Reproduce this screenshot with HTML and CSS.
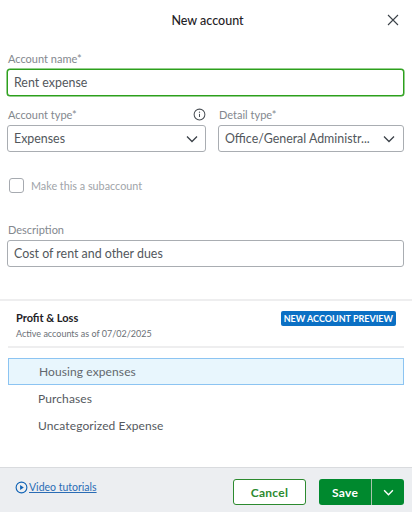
FILE: index.html
```html
<!DOCTYPE html>
<html lang="en">
<head>
<meta charset="utf-8">
<title>New account</title>
<link rel="stylesheet" href="styles.css">
</head>
<body>
<div class="dialog">
  <header class="head">
    <h1 class="title">New account</h1>
    <svg class="close" viewBox="0 0 12 12" width="12" height="12"><path d="M1 1l10 10M11 1L1 11" fill="none" stroke="#3b4148" stroke-width="1.1"/></svg>
  </header>
  <form class="form">
    <div class="field">
      <label class="label">Account name*</label>
      <div class="input input-active">Rent expense</div>
    </div>
    <div class="types">
      <div class="field type-a">
        <div class="label-row">
          <label class="label">Account type*</label>
          <svg class="info" viewBox="0 0 14 14" width="13" height="13"><circle cx="7" cy="7" r="5.8" fill="none" stroke="#4a4f55" stroke-width="1.1"/><path d="M7 6.3v3.4" stroke="#4a4f55" stroke-width="1.1"/><circle cx="7" cy="4.5" r=".7" fill="#4a4f55"/></svg>
        </div>
        <div class="input select">
          <span class="value">Expenses</span>
          <svg class="chev" viewBox="0 0 12 8" width="12" height="8"><path d="M1 1.5l5 5 5-5" fill="none" stroke="#3b4148" stroke-width="1.3"/></svg>
        </div>
      </div>
      <div class="field type-b">
        <div class="label-row"><label class="label">Detail type*</label></div>
        <div class="input select">
          <span class="value">Office/General Administr...</span>
          <svg class="chev" viewBox="0 0 12 8" width="12" height="8"><path d="M1 1.5l5 5 5-5" fill="none" stroke="#3b4148" stroke-width="1.3"/></svg>
        </div>
      </div>
    </div>
    <div class="check-row">
      <span class="check"></span>
      <span class="check-label">Make this a subaccount</span>
    </div>
    <div class="field">
      <label class="label">Description</label>
      <div class="input">Cost of rent and other dues</div>
    </div>
  </form>
  <section class="preview">
    <div class="preview-head">
      <div>
        <div class="pl-title">Profit &amp; Loss</div>
        <div class="pl-sub">Active accounts as of 07/02/2025</div>
      </div>
      <span class="badge">NEW ACCOUNT PREVIEW</span>
    </div>
    <ul class="list">
      <li class="item item-new">Housing expenses</li>
      <li class="item">Purchases</li>
      <li class="item">Uncategorized Expense</li>
    </ul>
  </section>
  <footer class="foot">
    <a class="video" href="#">
      <svg class="play" viewBox="0 0 14 14" width="13" height="13"><circle cx="7" cy="7" r="5.8" fill="none" stroke="#0f62b5" stroke-width="1.2"/><path d="M5.5 4.4l4 2.6-4 2.6z" fill="#0f62b5"/></svg>
      <span class="video-text">Video tutorials</span>
    </a>
    <div class="actions">
      <button class="btn cancel" type="button">Cancel</button>
      <div class="save-group">
        <button class="btn save" type="button">Save</button>
        <button class="btn save-more" type="button" aria-label="More">
          <svg viewBox="0 0 12 8" width="11" height="7"><path d="M1 1.5l5 5 5-5" fill="none" stroke="#fff" stroke-width="1.6"/></svg>
        </button>
      </div>
    </div>
  </footer>
</div>
</body>
</html>
```
FILE: styles.css
```css
* { box-sizing: border-box; }
html, body { margin: 0; padding: 0; }
body {
  width: 412px;
  height: 512px;
  overflow: hidden;
  background: #fff;
  font-family: Lato, "Liberation Sans", sans-serif;
  color: #393a3d;
}
.dialog { display: flex; flex-direction: column; height: 512px; }
.head {
  height: 41px;
  display: flex;
  align-items: center;
  justify-content: center;
  position: relative;
  flex: none;
}
.title { margin: 0 0 1px 3px; font-size: 12.5px; font-weight: 500; color: #1f2226; }
.close { position: absolute; right: 13px; top: 14px; }
.form { padding: 9px 8px 0 7px; flex: none; }
.field { display: flex; flex-direction: column; }
.label { font-size: 11px; line-height: 17px; color: #83888e; padding-left: 1px; }
.label-row { display: flex; justify-content: space-between; align-items: center; height: 17px; }
.input {
  height: 27px;
  margin-top: 2px;
  padding: 0 6px;
  display: flex;
  align-items: center;
  border: 1px solid #a9adb2;
  border-radius: 3px;
  font-size: 12.4px;
  color: #52575c;
  background: #fff;
}
.input-active { border-color: #2ca01c; box-shadow: 0 0 0 .5px #2ca01c; }
.types { display: flex; gap: 12px; margin-top: 10px; }
.type-a { width: 199px; }
.type-b { width: 186px; }
.select { justify-content: space-between; padding-right: 7px; }
.type-b .select { padding-right: 8px; }
.value { white-space: nowrap; }
.info { margin-bottom: 1px; }
.check-row { display: flex; align-items: center; gap: 7px; margin: 26px 0 0 2px; height: 15px; }
.check { width: 15px; height: 15px; border: 1px solid #a6aab0; border-radius: 3px; }
.check-label { font-size: 10.8px; color: #a0a4a9; }
.form > .field:last-child { margin-top: 28px; }
.preview { margin-top: 32px; border-top: 2px solid #eeeeef; padding: 0 8px; flex: 1; }
.preview-head {
  display: flex;
  justify-content: space-between;
  padding: 9px 8px 6px 8px;
  border-bottom: 2px solid #eeeeef;
  height: 47px;
}
.pl-title { font-size: 11px; line-height: 15px; font-weight: 700; color: #1e2126; }
.pl-sub { font-size: 9px; line-height: 12px; margin-top: 3px; color: #6b7076; }
.badge {
  height: 15px;
  margin-top: 1px;
  padding: 0 3px;
  border-radius: 2px;
  background: #0b70c4;
  color: #fff;
  font-size: 9px;
  font-weight: 700;
  line-height: 15px;
  white-space: nowrap;
}
.list { list-style: none; margin: 10px 0 0; padding: 0; }
.item { height: 27px; padding-left: 30px; display: flex; align-items: center; font-size: 12px; letter-spacing: .1px; color: #55595e; }
.item-new { background: #e8f6fd; border: 1px solid #8cc4f2; color: #62676d; }
.foot {
  height: 45px;
  flex: none;
  background: #eceef1;
  border-top: 1px solid #d9dbde;
  padding: 11px 8px 0 15px;
  display: flex;
  justify-content: space-between;
  align-items: flex-start;
}
.video { display: flex; align-items: center; gap: 1px; text-decoration: none; color: #2a6cb5; margin-top: 2px; }
.video-text { font-size: 10.5px; text-decoration: underline; margin-top: -1px; }
.actions { display: flex; gap: 13px; }
.btn {
  height: 26px;
  margin: 0;
  padding: 0;
  font-family: inherit;
  font-size: 12px;
  font-weight: 700;
  letter-spacing: .3px;
  border-radius: 3px;
}
.cancel { width: 73px; background: #fff; color: #2c8a2f; border: 1px solid #2c8a2f; }
.save-group { display: flex; width: 85px; }
.save { width: 52px; background: #00892e; color: #fff; border: 0; border-radius: 3px 0 0 3px; }
.save-more {
  width: 33px;
  background: #00892e;
  border: 0;
  border-left: 1.5px solid #a9c3ae;
  border-radius: 0 3px 3px 0;
  display: flex;
  align-items: center;
  justify-content: center;
}
```
